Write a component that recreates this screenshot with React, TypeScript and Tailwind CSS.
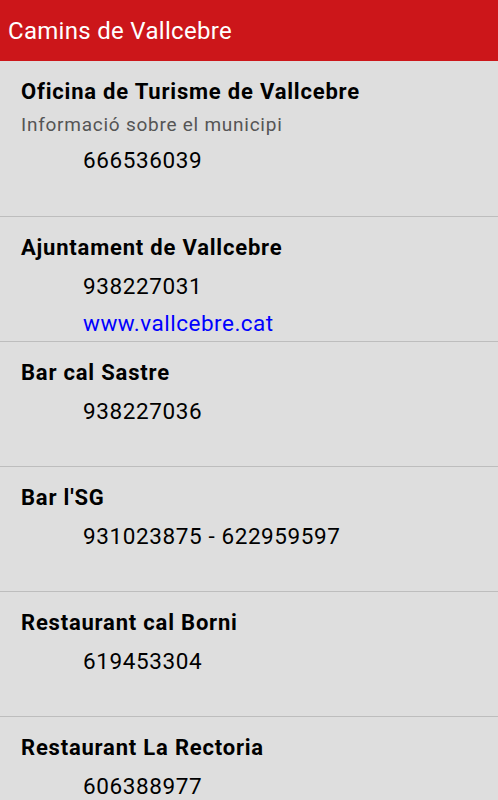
const places = [
  { name: 'Oficina de Turisme de Vallcebre', info: 'Informació sobre el municipi', phone: '666536039' },
  { name: 'Ajuntament de Vallcebre', phone: '938227031', web: 'www.vallcebre.cat' },
  { name: 'Bar cal Sastre', phone: '938227036' },
  { name: "Bar l'SG", phone: '931023875 - 622959597' },
  { name: 'Restaurant cal Borni', phone: '619453304' },
  { name: 'Restaurant La Rectoria', phone: '606388977' },
];

export default function App() {
  return (
    <div className="w-[498px] h-[800px] overflow-hidden bg-[#dedede] font-['Roboto',sans-serif] text-black">
      <header className="h-[61px] bg-[#cc161a] flex items-center px-2">
        <h1 className="text-white text-[24px] tracking-[0.3px] leading-none">Camins de Vallcebre</h1>
      </header>
      <ul>
        {places.map((p, i) => (
          <li
            key={p.name}
            className={`${i === 0 ? 'h-[156px]' : 'h-[125px]'} border-b border-[#bdbdbd] pt-[17px] pl-[21px]`}
          >
            <div className="text-[22px] tracking-[0.8px] font-bold leading-[28px]">{p.name}</div>
            {p.info && (
              <div className="text-[19px] tracking-[0.75px] leading-[38px] text-[#555555]">{p.info}</div>
            )}
            <div className={`pl-[62px] text-[22.5px] tracking-[0.6px] ${p.info ? 'leading-[32px]' : 'leading-[48px]'}`}>
              {p.phone}
            </div>
            {p.web && (
              <div className="pl-[62px] text-[22.5px] tracking-[0.5px] leading-[26px] text-[#0000ff]">{p.web}</div>
            )}
          </li>
        ))}
      </ul>
    </div>
  );
}
